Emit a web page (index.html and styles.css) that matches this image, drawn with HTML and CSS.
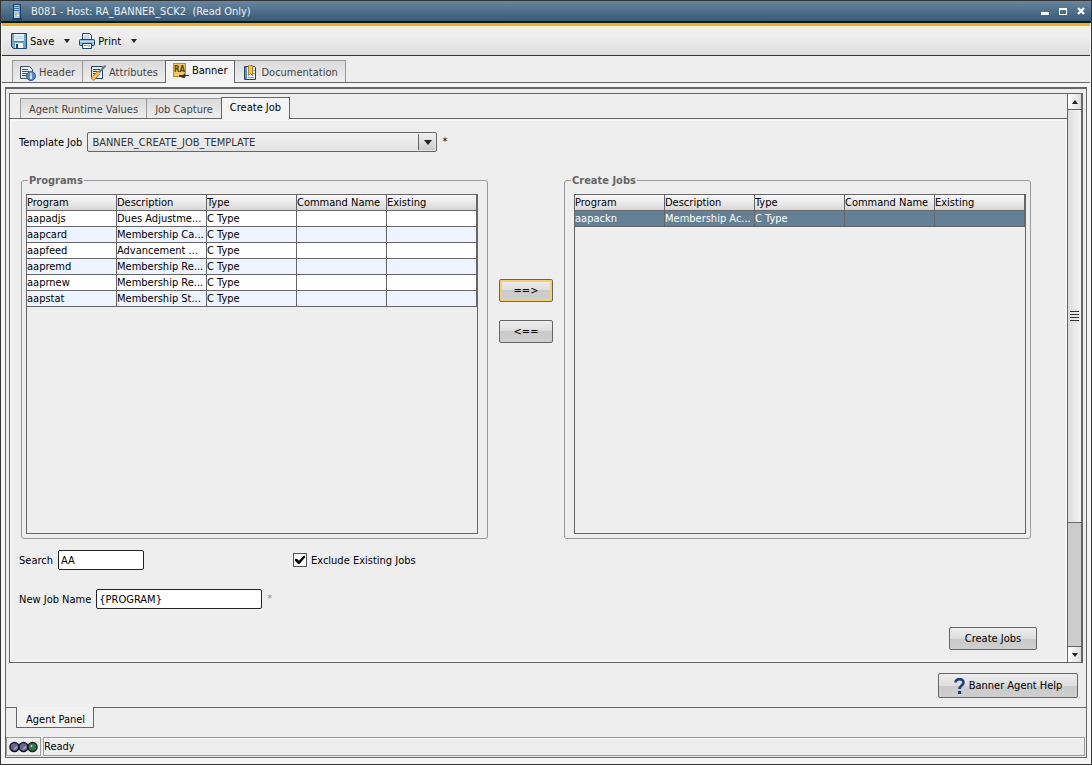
FILE: index.html
```html
<!DOCTYPE html>
<html lang="en">
<head>
  <meta charset="UTF-8" />
  <meta name="viewport" content="width=device-width, initial-scale=1.0" />
  <title>B081 - Host: RA_BANNER_SCK2 (Read Only)</title>
  <link rel="stylesheet" href="styles.css">
</head>
<body>
  <div class="window">
    <header class="titlebar">
      <svg class="title-icon" width="10" height="16" viewBox="0 0 10 16">
        <rect x="1" y="0" width="8" height="15" fill="#1d3f63" />
        <rect x="0" y="14" width="10" height="2" fill="#1d3f63" />
        <rect x="2" y="1" width="6" height="13" fill="#a9cdec" />
        <path d="M2 2.500h5M2 4.500h5M2 6.500h5" stroke="#3f6fa3" />
        <path d="M7.500 1v13" stroke="#6d9bc9" />
        <rect x="3" y="9" width="2" height="2" fill="#e0b52c" />
        <rect x="5" y="11" width="2" height="1" fill="#fff" />
      </svg>
      <h1>B081 - Host: RA_BANNER_SCK2 &nbsp;(Read Only)</h1>
      <div class="window-controls">
        <button type="button" aria-label="Minimize">
          <svg width="8" height="8" viewBox="0 0 8 8"><path d="M0 5h8v3H0z" fill="#fff" /></svg>
        </button>
        <button type="button" aria-label="Maximize">
          <svg width="8" height="8" viewBox="0 0 8 8"><path d="M0 1h8v7H0zM1 3v4h6V3z" fill="#fff" fill-rule="evenodd" /></svg>
        </button>
        <button type="button" aria-label="Close">
          <svg width="8" height="8" viewBox="0 0 8 8"><path d="M1 1l6 6M7 1l-6 6" stroke="#fff" stroke-width="2.400" /></svg>
        </button>
      </div>
    </header>

    <div class="toolbar">
      <button type="button" class="tool">
        <svg width="16" height="16" viewBox="0 0 16 16">
          <path d="M.5.5h15v15h-13l-2-2z" fill="#6ea3d8" stroke="#1c4474" />
          <rect x="3" y="1" width="10" height="7" fill="#e9f2fb" />
          <path d="M3 8.500h10" stroke="#4a7fb8" />
          <path d="M4 3.500h8M4 5.500h8" stroke="#b9d2ea" />
          <rect x="4" y="10" width="8" height="5" fill="#f4f8fc" />
          <rect x="5" y="11" width="2" height="4" fill="#1c4474" />
        </svg>
        Save
      </button>
      <button type="button" class="drop" aria-label="Save options"></button>
      <button type="button" class="tool">
        <svg width="16" height="16" viewBox="0 0 16 16">
          <path d="M3.500 6V.5h7l2 2V6" fill="#f3f8fd" stroke="#1c4474" />
          <path d="M5 3h5M5 5h6" stroke="#9dbedd" />
          <rect x=".5" y="6.500" width="15" height="6" rx="1" fill="#8db8e2" stroke="#1c4474" />
          <path d="M1 8.500h14" stroke="#d3e5f5" />
          <path d="M3.500 10.500h9v5h-9z" fill="#fff" stroke="#1c4474" />
          <path d="M5 12.500h4" stroke="#8aa" />
          <path d="M9 13h2" stroke="#3a9a56" />
        </svg>
        Print
      </button>
      <button type="button" class="drop" aria-label="Print options"></button>
    </div>

    <nav class="tabs main-tabs">
      <a href="#" class="tab">
        <svg width="16" height="16" viewBox="0 0 16 16">
          <path d="M.5 1.500h9l3 3v9H.5z" fill="#eef4fa" stroke="#3c4f68" />
          <path d="M2 4.500h6M2 6.500h7M2 8.500h5M2 10.500h4" stroke="#555" />
          <circle cx="11" cy="11" r="4.500" fill="#5a8ac4" stroke="#2c5790" />
          <path d="M11 8v1.500M11 10v4" stroke="#fff" stroke-width="1.500" />
        </svg>
        Header
      </a>
      <a href="#" class="tab">
        <svg width="16" height="16" viewBox="0 0 16 16">
          <path d="M1.500 1.500h11v12h-11z" fill="#e8f0f8" stroke="#1c4474" />
          <path d="M3 4.500h7M3 6.500h6M3 8.500h5" stroke="#444" />
          <path d="M15.500.5L9 7.500" stroke="#777" stroke-width="2" />
          <path d="M9 7.500L6 10.500L2 14.500" fill="none" stroke="#c87a14" stroke-width="4" />
          <path d="M9 7.500L2.500 14" stroke="#ffc24a" stroke-width="2.500" />
        </svg>
        Attributes
      </a>
      <a href="#" class="tab active">
        <svg width="16" height="16" viewBox="0 0 16 16">
          <rect x=".5" y=".5" width="12" height="13" fill="#eec860" stroke="#c88d28" />
          <text x="1" y="9" class="ra">RA</text>
          <path d="M6 12h4l2-2v2h4v1h-4v2h-2l-2-1H6z" fill="#333" />
        </svg>
        Banner
      </a>
      <a href="#" class="tab">
        <svg width="16" height="16" viewBox="0 0 16 16">
          <path d="M2.500 1.500h10l1 1v12h-11z" fill="#e6f0fa" stroke="#1c4474" />
          <path d="M4 2v12" stroke="#5f8fc4" stroke-width="2" />
          <path d="M11 5.500h2M11 8.500h2M6 12.500h6" stroke="#7fa6cf" />
          <path d="M6.500.5h4v10l-2-2-2 2z" fill="#ffc23d" stroke="#c27f12" />
        </svg>
        Documentation
      </a>
    </nav>

    <main class="frame">
      <section class="panel">
        <div class="page">
          <nav class="tabs sub-tabs">
            <a href="#" class="tab">Agent Runtime Values</a>
            <a href="#" class="tab">Job Capture</a>
            <a href="#" class="tab active">Create Job</a>
          </nav>

          <form class="job-form">
            <div class="row">
              <label for="template">Template Job</label>
              <div class="select">
                <select id="template">
                  <option>BANNER_CREATE_JOB_TEMPLATE</option>
                </select>
              </div>
              <span class="required">*</span>
            </div>

            <div class="lists">
              <fieldset class="programs">
                <legend>Programs</legend>
                <div class="table-pane">
                  <table>
                    <thead>
                      <tr><th>Program</th><th>Description</th><th>Type</th><th>Command Name</th><th>Existing</th></tr>
                    </thead>
                    <tbody>
                      <tr><td>aapadjs</td><td>Dues Adjustme...</td><td>C Type</td><td></td><td></td></tr>
                      <tr><td>aapcard</td><td>Membership Ca...</td><td>C Type</td><td></td><td></td></tr>
                      <tr><td>aapfeed</td><td>Advancement ...</td><td>C Type</td><td></td><td></td></tr>
                      <tr><td>aapremd</td><td>Membership Re...</td><td>C Type</td><td></td><td></td></tr>
                      <tr><td>aaprnew</td><td>Membership Re...</td><td>C Type</td><td></td><td></td></tr>
                      <tr><td>aapstat</td><td>Membership St...</td><td>C Type</td><td></td><td></td></tr>
                    </tbody>
                  </table>
                </div>
              </fieldset>

              <div class="movers">
                <button type="button" class="btn focused">==&gt;</button>
                <button type="button" class="btn">&lt;==</button>
              </div>

              <fieldset class="create-jobs">
                <legend>Create Jobs</legend>
                <div class="table-pane">
                  <table>
                    <thead>
                      <tr><th>Program</th><th>Description</th><th>Type</th><th>Command Name</th><th>Existing</th></tr>
                    </thead>
                    <tbody>
                      <tr class="selected"><td>aapackn</td><td>Membership Ac...</td><td>C Type</td><td></td><td></td></tr>
                    </tbody>
                  </table>
                </div>
              </fieldset>
            </div>

            <div class="row search-row">
              <label for="search">Search</label>
              <input type="text" id="search" class="short" value="AA" />
              <div class="check">
                <input type="checkbox" id="exclude" checked />
                <label for="exclude">Exclude Existing Jobs</label>
              </div>
            </div>

            <div class="row name-row">
              <label for="jobname">New Job Name</label>
              <input type="text" id="jobname" class="long" value="{PROGRAM}" />
              <span class="required muted">*</span>
            </div>

            <div class="submit-row">
              <button type="button" class="btn wide">Create Jobs</button>
            </div>
          </form>
        </div>

        <div class="scrollbar">
          <button type="button" class="up" aria-label="Scroll up"></button>
          <div class="thumb"><span class="grip"></span></div>
          <div class="trough"></div>
          <button type="button" class="down" aria-label="Scroll down"></button>
        </div>
      </section>

      <div class="help-row">
        <button type="button" class="btn help">
          <svg width="11" height="16" viewBox="0 0 11 16">
            <path d="M1.500 4.500C1.500 0 9.500 0 9.500 4.500C9.500 7.500 5.500 7.500 5.500 11" fill="none" stroke="#1d3f7c" stroke-width="2.600" />
            <rect x="4" y="13" width="3" height="3" fill="#1d3f7c" />
          </svg>
          Banner Agent Help
        </button>
      </div>

      <nav class="bottom-tabs">
        <a href="#">Agent Panel</a>
      </nav>

      <footer class="status">
        <div class="lights">
          <svg width="29" height="12" viewBox="0 0 29 12">
            <circle cx="5.500" cy="6" r="4.500" fill="#66668c" stroke="#15152a" stroke-width="1.500" />
            <path d="M5 8.500l3-3" stroke="#a9a9d4" stroke-width="1.500" />
            <circle cx="14.500" cy="6" r="4.500" fill="#66668c" stroke="#15152a" stroke-width="1.500" />
            <path d="M14 8.500l3-3" stroke="#a9a9d4" stroke-width="1.500" />
            <circle cx="23.500" cy="6" r="4.500" fill="#2c7a4c" stroke="#10241a" stroke-width="1.500" />
            <circle cx="22.500" cy="5" r="1" fill="#b4dcc2" />
          </svg>
        </div>
        <div class="message">Ready</div>
      </footer>
    </main>
  </div>
</body>
</html>
```
FILE: styles.css
```css
* {
  box-sizing: border-box;
}

body {
  margin: 0;
  font-family: "DejaVu Sans Condensed", "DejaVu Sans", sans-serif;
  font-size: 11px;
  line-height: 13px;
  color: #000;
}

button,
input,
select {
  font: inherit;
  color: inherit;
  margin: 0;
}

svg {
  display: block;
  flex: none;
}

a {
  color: inherit;
  text-decoration: none;
}

.window {
  display: flex;
  flex-direction: column;
  min-height: 100vh;
  background: #f6f6f6;
  border: 1px solid #333;
}

/* Title bar */
.titlebar {
  display: flex;
  align-items: center;
  gap: 9px;
  height: 22px;
  padding: 1px 6px 0 11px;
  background: linear-gradient(#68859e, #375a76);
  border-bottom: 2px solid #10181f;
}

.titlebar h1 {
  flex: 1;
  margin: 0;
  font-size: 11px;
  font-weight: normal;
  color: #eee;
}

.window-controls {
  display: flex;
  gap: 10px;
  padding-bottom: 2px;
}

.window-controls button {
  padding: 0;
  background: none;
  border: 0;
}

/* Toolbar */
.toolbar {
  display: flex;
  align-items: center;
  height: 33px;
  margin: 0 1px;
  padding: 1px 0 0 9px;
  border-top: 3px solid #f4b10d;
  border-bottom: 1px solid #333;
  background: linear-gradient(#eee 40%, #dcdcdc);
}

.tool {
  display: flex;
  align-items: center;
  gap: 3px;
  padding: 0;
  background: none;
  border: 0;
}

.drop {
  display: flex;
  justify-content: center;
  width: 25px;
  padding: 0;
  background: none;
  border: 0;
}

.drop::before {
  content: "";
  border: 3px solid transparent;
  border-top: 4px solid #222;
  border-bottom: 0;
}

/* Tabs */
.tabs {
  display: flex;
  align-items: flex-end;
  border-bottom: 1px solid #666;
  background: #eee;
}

.tab {
  display: flex;
  align-items: center;
  gap: 3px;
  margin-right: -1px;
  padding: 2px 7px 0;
  border: 1px solid #999;
  border-bottom: 0;
  background: linear-gradient(#dadada, #eee);
  color: #444;
}

.tab.active {
  position: relative;
  margin-bottom: -1px;
  padding-top: 0;
  padding-bottom: 3px;
  border-color: #666;
  background: #f4f4f4;
  color: #000;
}

.main-tabs {
  height: 27px;
  margin: 0 1px;
  padding-left: 10px;
}

.main-tabs .tab {
  height: 22px;
}

.main-tabs .tab.active {
  height: 23px;
}

.sub-tabs {
  height: 25px;
  padding-left: 10px;
}

.sub-tabs .tab {
  height: 20px;
  padding-left: 8px;
  padding-right: 8px;
}

.sub-tabs .tab.active {
  height: 22px;
}

.ra {
  font-family: "DejaVu Sans Condensed", sans-serif;
  font-size: 8px;
  font-weight: bold;
  fill: #5a4512;
}

/* Inner frame */
.frame {
  flex: 1;
  display: flex;
  flex-direction: column;
  margin: 4px 4px 6px;
  border: 1px solid #666;
  border-top-width: 2px;
  background: #eee;
}

.panel {
  flex: 1;
  display: flex;
  margin: 4px 3px 0;
  border: 1px solid #666;
}

.page {
  flex: 1;
  display: flex;
  flex-direction: column;
}

.job-form {
  flex: 1;
  display: flex;
  flex-direction: column;
  padding: 11px 30px 10px 7px;
  border: 2px solid #f5f5f5;
}

.row {
  display: flex;
  align-items: center;
  gap: 5px;
}

.required {
  line-height: 16px;
}

.muted {
  color: #899;
}

.select {
  position: relative;
  width: 350px;
}

select {
  display: block;
  width: 100%;
  height: 20px;
  padding: 0 4px;
  appearance: none;
  border: 1px solid #666;
  border-radius: 2px;
  color: #333;
  background: linear-gradient(#f2f2f2, #e2e2e2);
}

/* drop-down box and its arrow, laid over the select */
.select::before {
  content: "";
  position: absolute;
  top: 2px;
  right: 2px;
  bottom: 2px;
  width: 16px;
  border-left: 1px solid #666;
  background: linear-gradient(#eee, #ccc);
  pointer-events: none;
}

.select::after {
  content: "";
  position: absolute;
  top: 8px;
  right: 5px;
  border: 4px solid transparent;
  border-top: 5px solid #222;
  border-bottom: 0;
  pointer-events: none;
}

/* Program lists */
.lists {
  flex: 1;
  display: grid;
  grid-template-columns: 1fr 54px 1fr;
  column-gap: 11px;
  margin: 22px 4px 0 2px;
}

fieldset {
  display: flex;
  flex-direction: column;
  min-width: 0;
  margin: 0;
  border: 1px solid #999;
  border-radius: 3px;
}

.programs {
  padding: 7px 9px 4px 4px;
}

.create-jobs {
  padding: 7px 4px 4px 9px;
}

.create-jobs legend {
  margin-left: -3px;
}

legend {
  margin-left: 2px;
  padding: 0 1px;
  font-weight: bold;
  color: #666;
}

.table-pane {
  height: 100%;
  border: 1px solid #666;
}

table {
  width: 100%;
  table-layout: fixed;
  border-collapse: separate;
  border-spacing: 0;
}

th,
td {
  height: 16px;
  padding: 0 0 1px;
  overflow: hidden;
  border-right: 1px solid #666;
  border-bottom: 1px solid #666;
  font-weight: normal;
  text-align: left;
  line-height: 13px;
  white-space: nowrap;
}

th {
  background: linear-gradient(#fafafa, #d8d8d8);
}

td {
  background: #fff;
}

tbody tr:nth-child(even) td {
  background: #edf4ff;
}

tbody tr.selected td {
  background: #648096;
  color: #fff;
}

.movers {
  display: flex;
  flex-direction: column;
  gap: 18px;
  padding-top: 105px;
}

/* Buttons */
.btn {
  height: 23px;
  padding: 0;
  border: 1px solid #666;
  border-radius: 2px;
  background: linear-gradient(#eee, #ddd 50%, #cacaca 50%, #cfcfcf);
}

.btn.focused {
  box-shadow: inset 0 0 0 2px #f8cf70;
}

.btn.wide {
  width: 88px;
}

/* Fields under the lists */
.search-row {
  margin-top: 11px;
}

.name-row {
  margin-top: 19px;
}

input[type="text"] {
  height: 20px;
  padding: 0 2px;
  border: 1px solid #222;
  border-radius: 2px;
  background: #fff;
}

.short {
  width: 86px;
}

.long {
  width: 166px;
}

.check {
  display: flex;
  align-items: center;
  gap: 4px;
  margin-left: 144px;
}

input[type="checkbox"] {
  display: grid;
  place-items: center;
  width: 14px;
  height: 14px;
  appearance: none;
  border: 1px solid #555;
  background: #fff;
}

input[type="checkbox"]:checked::before {
  content: "";
  width: 10px;
  height: 8px;
  background: #000;
  clip-path: polygon(0 35%, 20% 35%, 40% 60%, 85% 0, 100% 0, 100% 20%, 45% 100%, 30% 100%, 0 60%);
}

.submit-row {
  display: flex;
  justify-content: flex-end;
  margin-top: 18px;
  margin-right: -2px;
}

/* Scrollbar */
.scrollbar {
  display: flex;
  flex-direction: column;
  width: 15px;
  border: solid #666;
  border-width: 0 1px;
}

.scrollbar button {
  display: grid;
  place-items: center;
  height: 15px;
  padding: 0;
  border: 0;
  background: linear-gradient(90deg, #fff, #ddd);
}

.scrollbar button::before {
  content: "";
  border: 3px solid transparent;
}

.scrollbar .up::before {
  border-bottom: 4px solid #222;
  border-top: 0;
}

.scrollbar .down::before {
  border-top: 4px solid #222;
  border-bottom: 0;
}

.thumb {
  flex: 10;
  display: grid;
  place-items: center;
  border: solid #666;
  border-width: 1px 0;
  background: linear-gradient(90deg, #dcdcdc, #f6f6f6);
}

.grip {
  width: 9px;
  height: 10px;
  background: repeating-linear-gradient(#333 0 1px, transparent 1px 3px);
}

.trough {
  flex: 3;
  background: #ccc;
  border-bottom: 1px solid #666;
}

/* Bottom of the frame */
.help-row {
  display: flex;
  justify-content: flex-end;
  margin: 0 3px;
  padding: 10px 5px 9px;
}

.btn.help {
  display: flex;
  align-items: center;
  justify-content: center;
  gap: 4px;
  width: 140px;
  height: 25px;
}

.bottom-tabs {
  display: flex;
  height: 30px;
  padding-left: 10px;
  border-top: 1px solid #666;
}

.bottom-tabs a {
  height: 21px;
  margin-top: -1px;
  padding: 6px 8px 0 9px;
  border: 1px solid #666;
  border-top: 0;
  background: #f2f2f2;
}

.status {
  display: flex;
  gap: 2px;
  height: 19px;
  margin: 0 1px 1px 0;
}

.lights,
.message {
  display: flex;
  align-items: center;
  border: 1px solid #999;
}

.lights {
  padding: 0 2px;
}

.message {
  flex: 1;
  box-shadow: inset 1px 1px #fff;
}
```
